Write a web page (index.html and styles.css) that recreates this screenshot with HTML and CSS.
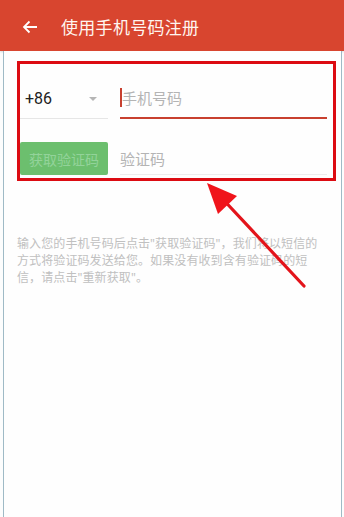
FILE: index.html
```html
<!DOCTYPE html>
<html lang="zh">
<head>
<meta charset="utf-8">
<link rel="stylesheet" href="styles.css">
</head>
<body>
<div class="screen">
  <header class="appbar">
    <svg class="back" width="16" height="14" viewBox="0 0 16 14"><path d="M15 7H2M7.5 1.5L2 7l5.5 5.5" fill="none" stroke="#fff" stroke-width="1.8"/></svg>
    <span class="title">使用手机号码注册</span>
  </header>
  <main class="content">
    <div class="formbox">
      <div class="row row-phone">
        <div class="country">
          <span class="code">+86</span>
          <span class="caret"></span>
        </div>
        <div class="field active">
          <span class="cursor"></span><span class="ph">手机号码</span>
        </div>
      </div>
      <div class="row row-code">
        <button class="getcode">获取验证码</button>
        <div class="field">
          <span class="ph">验证码</span>
        </div>
      </div>
    </div>
    <p class="hint">输入您的手机号码后点击"获取验证码"，我们将以短信的<br>方式将验证码发送给您。如果没有收到含有验证码的短<br>信，请点击"重新获取"。</p>
    <svg class="pointer" width="120" height="120" viewBox="0 0 120 120">
      <line x1="100" y1="104" x2="14" y2="12" stroke="#e3141b" stroke-width="3.2" stroke-linecap="round"/>
      <polygon points="3,1 33,14 14,32" fill="#f0141b"/>
    </svg>
  </main>
</div>
</body>
</html>
```
FILE: styles.css
```css
* { box-sizing: border-box; margin: 0; padding: 0; }
html, body { width: 344px; height: 517px; overflow: hidden; }
body {
  background: #fcfdfd;
  font-family: "Noto Sans CJK SC", "Noto Sans", Roboto, sans-serif;
}
.screen {
  width: 344px;
  height: 517px;
  display: flex;
  flex-direction: column;
  position: relative;
}
.appbar {
  height: 51px;
  background: #d8452f;
  display: flex;
  align-items: center;
  padding-left: 22px;
  padding-top: 2px;
  color: #fff;
  box-shadow: 0 1px 2px rgba(0,0,0,0.15);
}
.back { flex: none; }
.title {
  margin-left: 23px;
  font-size: 17px;
  color: #fff5f0;
  letter-spacing: 0.3px;
}
.content {
  flex: 1;
  position: relative;
  margin: 0 2px 0 3px;
  border-left: 1px solid #9fbac6;
  border-right: 1px solid #9fbac6;
  background: #fefefe;
  padding: 10px 4px 0 13px;
}
.formbox {
  width: 319px;
  height: 120px;
  border: 3px solid #dc0b12;
  padding: 15px 6px 0 0;
  display: flex;
  flex-direction: column;
}
.row { display: flex; align-items: flex-end; }
.row-phone { height: 40px; }
.country {
  width: 88px;
  height: 38px;
  border-bottom: 1px solid #e6e6e6;
  display: flex;
  align-items: center;
  justify-content: space-between;
  padding: 0 11px 2px 5px;
}
.code { font-family: Roboto, "Noto Sans", sans-serif; font-size: 16px; color: #222; }
.caret {
  width: 0; height: 0;
  border-left: 4.5px solid transparent;
  border-right: 4.5px solid transparent;
  border-top: 4.5px solid #b5b5b5;
}
.field {
  flex: 1;
  margin-left: 12px;
  height: 38px;
  display: flex;
  align-items: center;
  border-bottom: 1px solid #ececec;
  padding-bottom: 2px;
}
.field.active { border-bottom: 2px solid #c8402f; height: 40px; }
.cursor {
  width: 2px; height: 19px; background: #c8402f; margin-right: 0;
}
.ph { font-size: 15px; color: #b4b4b4; }
.row-code { margin-top: 23px; height: 33px; align-items: stretch; }
.row-code .field { height: 33px; margin-left: 12px; padding-bottom: 0; }
.getcode {
  width: 88px;
  border: none;
  border-radius: 2px;
  background: #6cbf6e;
  color: #93d39a;
  font-family: "Noto Sans CJK SC", sans-serif;
  font-size: 14px;
}
.hint {
  margin-top: 54px;
  white-space: nowrap;
  font-family: "Noto Sans", "Noto Sans CJK SC", sans-serif;
  font-size: 12px;
  line-height: 17px;
  color: #c0c0c0;
  letter-spacing: 0.1px;
}
.pointer {
  position: absolute;
  left: 200px;
  top: 131px;
}
```
